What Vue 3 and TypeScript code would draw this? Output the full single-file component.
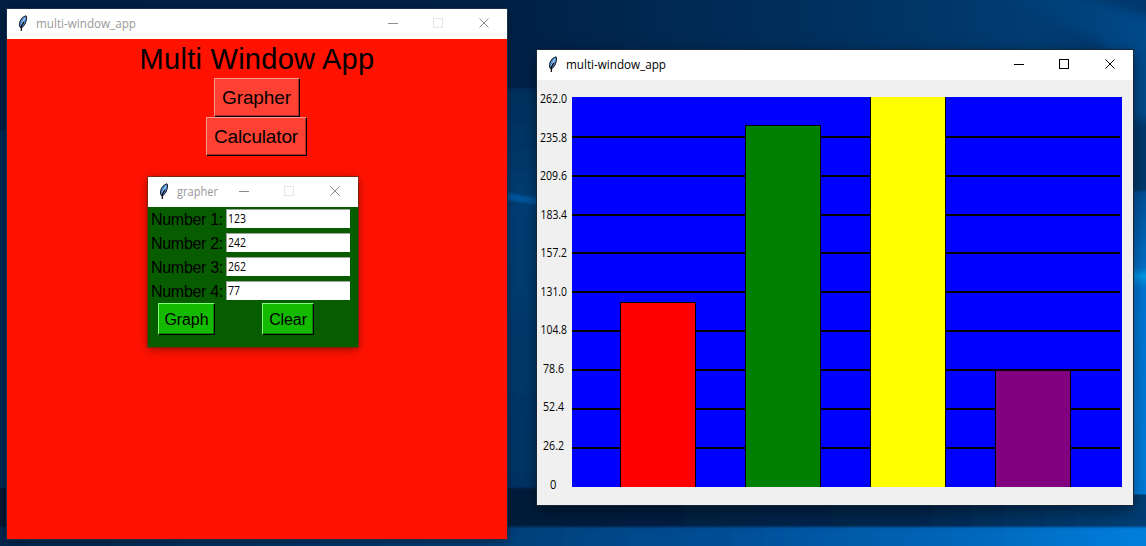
<script setup lang="ts">
interface Tick { label: string; x: number; width: number; y: number; line: number | null }
interface Bar { x: number; top: number; fill: string }
interface Field { label: string; value: string }

// Coordinates are relative to the chart window's client area.
const ticks: Tick[] = [
  { label: '262.0', x: 3, width: 27, y: 23, line: null },
  { label: '235.8', x: 3, width: 27, y: 62, line: 56 },
  { label: '209.6', x: 3, width: 27, y: 100, line: 95 },
  { label: '183.4', x: 3.5, width: 26.5, y: 139, line: 134 },
  { label: '157.2', x: 3.5, width: 26.5, y: 177, line: 172 },
  { label: '131.0', x: 3.5, width: 26.5, y: 216, line: 211 },
  { label: '104.8', x: 3.5, width: 26.5, y: 254, line: 250 },
  { label: '78.6', x: 6, width: 21, y: 293, line: 289 },
  { label: '52.4', x: 6, width: 21, y: 331, line: 328 },
  { label: '26.2', x: 6, width: 21, y: 370, line: 367 },
  { label: '0', x: 13, width: 6.4, y: 409, line: null },
]

const bars: Bar[] = [
  { x: 83, top: 222, fill: '#ff0000' },
  { x: 208, top: 45, fill: '#008000' },
  { x: 333, top: 10, fill: '#ffff00' },
  { x: 458, top: 290, fill: '#800080' },
]

const fields: Field[] = [
  { label: 'Number 1:', value: '123' },
  { label: 'Number 2:', value: '242' },
  { label: 'Number 3:', value: '262' },
  { label: 'Number 4:', value: '77' },
]
</script>

<template>
  <div class="desktop">
    <svg class="wallpaper" viewBox="0 0 1146 546" width="1146" height="546">
      <defs>
        <linearGradient id="sky" x1="0" y1="0" x2="1" y2="0">
          <stop offset="0" stop-color="#001f42" />
          <stop offset=".45" stop-color="#002147" />
          <stop offset=".7" stop-color="#002f5c" />
          <stop offset=".9" stop-color="#003c72" />
          <stop offset="1" stop-color="#00386c" />
        </linearGradient>
        <linearGradient id="ray" x1="0" y1="0" x2="1" y2="0">
          <stop offset="0" stop-color="#004078" stop-opacity="0" />
          <stop offset="1" stop-color="#004f94" />
        </linearGradient>
        <linearGradient id="middle" x1="0" y1="0" x2="0" y2="1">
          <stop offset="0" stop-color="#002f5c" />
          <stop offset=".3" stop-color="#003e74" />
          <stop offset="1" stop-color="#003362" />
        </linearGradient>
        <linearGradient id="edge" x1="0" y1="0" x2="0" y2="1">
          <stop offset="0" stop-color="#004f98" />
          <stop offset=".24" stop-color="#006fc8" />
          <stop offset=".265" stop-color="#009ae8" />
          <stop offset=".3" stop-color="#0076d4" />
          <stop offset="1" stop-color="#007ddc" />
        </linearGradient>
        <linearGradient id="band" x1="0" y1="0" x2="1" y2="0">
          <stop offset="0" stop-color="#001632" />
          <stop offset=".5" stop-color="#001c3c" />
          <stop offset=".8" stop-color="#00284f" />
          <stop offset="1" stop-color="#003f76" />
        </linearGradient>
        <linearGradient id="floor" x1="0" y1="0" x2="1" y2="0">
          <stop offset="0" stop-color="#00274d" />
          <stop offset=".43" stop-color="#003f78" />
          <stop offset=".65" stop-color="#00509a" />
          <stop offset=".85" stop-color="#0069bd" />
          <stop offset="1" stop-color="#0080e0" />
        </linearGradient>
        <filter id="soft" x="-10%" y="-50%" width="120%" height="200%"><feGaussianBlur stdDeviation="5" /></filter>
        <filter id="fine" x="-10%" y="-50%" width="120%" height="200%"><feGaussianBlur stdDeviation="1.2" /></filter>
      </defs>
      <rect width="1146" height="546" fill="url(#sky)" />
      <path d="M980 -12 L1046 -12 L1170 22 V120 H1128 L1100 40 Z" fill="url(#ray)" filter="url(#soft)" />
      <rect x="500" y="88" width="45" height="402" fill="url(#middle)" filter="url(#fine)" />
      <path d="M500 192 L545 199 V206 L500 199 Z" fill="#00549c" filter="url(#fine)" />
      <rect y="130" width="8" height="365" fill="#002b55" filter="url(#fine)" />
      <rect x="1125" y="191" width="30" height="320" fill="url(#edge)" filter="url(#fine)" />
      <rect x="-10" y="488" width="1170" height="39" fill="url(#band)" filter="url(#fine)" />
      <rect x="1128" y="480" width="20" height="14.5" fill="#007bd9" />
      <rect x="-10" y="527" width="1170" height="30" fill="url(#floor)" filter="url(#fine)" />
    </svg>

    <section class="window main inactive">
      <header class="bar">
        <svg class="feather" viewBox="0 0 12 17" width="12" height="17">
          <path d="M3.2 12.4 L2.4 10.2 L3 6.3 L5.4 2.6 L8.9 .7 L9.6 1.8 L9.3 5.4 L8 9 L5.5 12.3 Z" fill="#4f8ed6" stroke="#15181f" stroke-width="1" />
          <path d="M4.6 9.5 L7.8 3" stroke="#a9d0f5" stroke-width="1.3" />
          <path d="M4.3 16 L4.3 11.5 L6.8 6.8" fill="none" stroke="#000" stroke-width="1.2" />
        </svg>
        <svg class="caption" width="104" height="20"><text x="0" y="14" textLength="100" lengthAdjust="spacingAndGlyphs">multi-window_app</text></svg>
        <svg class="controls" width="102" height="10" viewBox="0 0 102 10" fill="none">
          <path d="M0 5.5H10" class="ink" /><rect x="45.5" y=".5" width="9" height="9" class="box" /><path d="M91.5 .5l9 9M100.5 .5l-9 9" class="ink" />
        </svg>
      </header>
      <div class="home">
        <h1>Multi Window App</h1>
        <button class="tk grapher-btn">Grapher</button>
        <button class="tk calc-btn">Calculator</button>
      </div>
    </section>

    <section class="window form inactive">
      <header class="bar">
        <svg class="feather" viewBox="0 0 12 17" width="12" height="17">
          <path d="M3.2 12.4 L2.4 10.2 L3 6.3 L5.4 2.6 L8.9 .7 L9.6 1.8 L9.3 5.4 L8 9 L5.5 12.3 Z" fill="#4f8ed6" stroke="#15181f" stroke-width="1" />
          <path d="M4.6 9.5 L7.8 3" stroke="#a9d0f5" stroke-width="1.3" />
          <path d="M4.3 16 L4.3 11.5 L6.8 6.8" fill="none" stroke="#000" stroke-width="1.2" />
        </svg>
        <svg class="caption" width="50" height="20"><text x="0" y="14" textLength="41" lengthAdjust="spacingAndGlyphs">grapher</text></svg>
        <svg class="controls" width="102" height="10" viewBox="0 0 102 10" fill="none">
          <path d="M0 5.5H10" class="ink" /><rect x="45.5" y=".5" width="9" height="9" class="box" /><path d="M91.5 .5l9 9M100.5 .5l-9 9" class="ink" />
        </svg>
      </header>
      <div class="green">
        <div v-for="f in fields" :key="f.label" class="row">
          <label>{{ f.label }}</label>
          <div class="entry">
            <svg width="60" height="17"><text x="1" y="12.5" :textLength="f.value.length * 6" lengthAdjust="spacingAndGlyphs">{{ f.value }}</text></svg>
          </div>
        </div>
        <div class="actions">
          <button class="tk small graph-btn">Graph</button>
          <button class="tk small clear-btn">Clear</button>
        </div>
      </div>
    </section>

    <section class="window chart">
      <header class="bar">
        <svg class="feather" viewBox="0 0 12 17" width="12" height="17">
          <path d="M3.2 12.4 L2.4 10.2 L3 6.3 L5.4 2.6 L8.9 .7 L9.6 1.8 L9.3 5.4 L8 9 L5.5 12.3 Z" fill="#4f8ed6" stroke="#15181f" stroke-width="1" />
          <path d="M4.6 9.5 L7.8 3" stroke="#a9d0f5" stroke-width="1.3" />
          <path d="M4.3 16 L4.3 11.5 L6.8 6.8" fill="none" stroke="#000" stroke-width="1.2" />
        </svg>
        <svg class="caption" width="104" height="20"><text x="0" y="14" textLength="100" lengthAdjust="spacingAndGlyphs">multi-window_app</text></svg>
        <svg class="controls" width="102" height="10" viewBox="0 0 102 10" fill="none">
          <path d="M0 5.5H10" class="ink" /><rect x="45.5" y=".5" width="9" height="9" class="box" /><path d="M91.5 .5l9 9M100.5 .5l-9 9" class="ink" />
        </svg>
      </header>
      <svg class="plot" width="596" height="425" viewBox="0 0 596 425">
        <clipPath id="area"><rect x="35" y="17" width="550" height="390" /></clipPath>
        <rect x="35" y="17" width="550" height="390" fill="#0000ff" />
        <template v-for="t in ticks" :key="t.label">
          <text :x="t.x" :y="t.y" :textLength="t.width" lengthAdjust="spacingAndGlyphs">{{ t.label }}</text>
          <rect v-if="t.line !== null" x="35" :y="t.line" width="548" height="2" fill="#000" />
        </template>
        <g clip-path="url(#area)">
          <rect v-for="b in bars" :key="b.x" :x="b.x + 0.5" :y="b.top + 0.5" width="75" height="430" :fill="b.fill" stroke="#000" />
        </g>
      </svg>
    </section>
  </div>
</template>

<style>
html, body { margin: 0; overflow: hidden; }
</style>

<style scoped>
.desktop { position: relative; width: 1146px; height: 546px; overflow: hidden; font-family: "Liberation Sans", Arial, sans-serif; color: #000; }
.wallpaper { display: block; }
svg text { font-family: "Open Sans", "Noto Sans", sans-serif; font-size: 12px; fill: #000; }

.window { position: absolute; display: flex; flex-direction: column; box-shadow: 0 0 0 1px #17304a, 0 2px 9px rgba(0, 0, 0, .45); }
.main { left: 7px; top: 9px; width: 500px; height: 530px; }
.form { left: 148px; top: 177px; width: 210px; height: 170px; box-shadow: 0 0 0 1px rgba(80, 50, 30, .65), 0 2px 9px rgba(0, 0, 0, .45); }
.chart { left: 537px; top: 50px; width: 596px; height: 455px; box-shadow: 0 0 0 1px #142638, 0 4px 14px rgba(0, 0, 0, .5); }

.bar { display: flex; align-items: flex-start; height: 30px; flex: none; background: #fff; }
.feather { flex: none; margin: 6px 0 0 10px; }
.caption { flex: none; margin: 5px 0 0 7px; }
.controls { flex: none; margin: 9px 17px 0 auto; }
.ink { stroke: #000; stroke-width: 1; }
.box { stroke: #000; stroke-width: 1; }
.inactive .ink { stroke: #8c8c8c; }
.inactive .box { stroke: #e6e6e6; }
.inactive .caption text { fill: #999; }

.home { flex: 1; display: flex; flex-direction: column; align-items: center; background: #ff1200; }
h1 { margin: 0; height: 39px; line-height: 41px; font-size: 29px; font-weight: 400; letter-spacing: .27px; white-space: nowrap; }
.tk {
  box-sizing: border-box; padding: 0; border: 1px solid; border-color: #ff9a90 #000 #000 #ff9a90;
  box-shadow: inset -1px -1px 0 #b02c22; background: #ff4133; color: #000;
  font-family: inherit; font-size: 19px; line-height: 36px; height: 39px; text-align: center;
}
.grapher-btn { width: 86px; padding-right: 1px; letter-spacing: -.1px; }
.calc-btn { width: 101px; margin-right: 1px; padding-right: 1px; letter-spacing: -.15px; }

.green { flex: 1; background: #085c00; padding-top: 2px; }
.row { display: flex; height: 24px; align-items: flex-start; }
.row label { width: 75px; margin-left: 3px; font-size: 16px; line-height: 22px; letter-spacing: -.3px; white-space: nowrap; }
.entry { box-sizing: border-box; width: 124px; height: 19px; background: #fff; border-top: 1px solid #a0a0a0; border-left: 1px solid #a0a0a0; }
.entry svg { display: block; }
.actions { display: flex; gap: 47px; margin-left: 10px; margin-top: -2px; }
.tk.small { height: 32px; font-size: 16px; line-height: 28px; padding-top: 2px; letter-spacing: -.1px; background: #14ba00; border-color: #82ff74 #000 #000 #82ff74; box-shadow: inset -1px -1px 0 #0c7a00; }
.graph-btn { width: 57px; }
.clear-btn { width: 52px; }

.plot { display: block; background: #f0f0f0; }
</style>
